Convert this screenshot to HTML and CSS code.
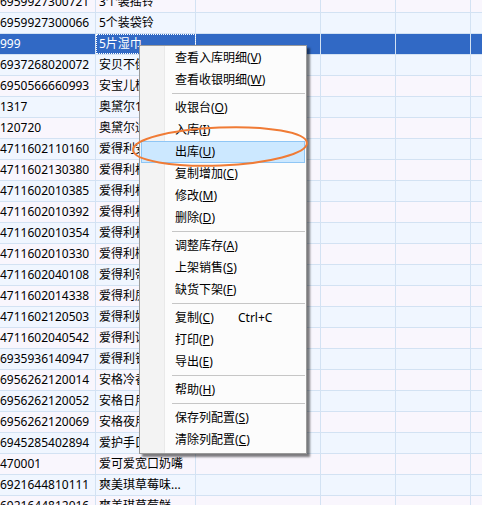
FILE: index.html
```html
<!DOCTYPE html>
<html lang="zh-CN">
<head>
<meta charset="utf-8">
<title>商品列表</title>
<link rel="stylesheet" href="styles.css">
</head>
<body>
<div class="grid">
  <div class="row even"><div class="c c1">6959927300721</div><div class="c c2">3个装摇铃</div><div class="c c3"></div><div class="c c4"></div><div class="c c5"></div><div class="c c6"></div></div>
  <div class="row odd"><div class="c c1">6959927300066</div><div class="c c2">5个装袋铃</div><div class="c c3"></div><div class="c c4"></div><div class="c c5"></div><div class="c c6"></div></div>
  <div class="row sel"><div class="c c1">999</div><div class="c c2 focus">5片湿巾</div><div class="c c3"></div><div class="c c4"></div><div class="c c5"></div><div class="c c6"></div></div>
  <div class="row odd"><div class="c c1">6937268020072</div><div class="c c2">安贝不倒翁</div><div class="c c3"></div><div class="c c4"></div><div class="c c5"></div><div class="c c6"></div></div>
  <div class="row even"><div class="c c1">6950566660993</div><div class="c c2">安宝儿梳子</div><div class="c c3"></div><div class="c c4"></div><div class="c c5"></div><div class="c c6"></div></div>
  <div class="row odd"><div class="c c1">1317</div><div class="c c2">奥黛尔1段</div><div class="c c3"></div><div class="c c4"></div><div class="c c5"></div><div class="c c6"></div></div>
  <div class="row even"><div class="c c1">120720</div><div class="c c2">奥黛尔适度</div><div class="c c3"></div><div class="c c4"></div><div class="c c5"></div><div class="c c6"></div></div>
  <div class="row odd"><div class="c c1">4711602110160</div><div class="c c2">爱得利安抚奶嘴</div><div class="c c3"></div><div class="c c4"></div><div class="c c5"></div><div class="c c6"></div></div>
  <div class="row even"><div class="c c1">4711602130380</div><div class="c c2">爱得利标准奶瓶</div><div class="c c3"></div><div class="c c4"></div><div class="c c5"></div><div class="c c6"></div></div>
  <div class="row odd"><div class="c c1">4711602010385</div><div class="c c2">爱得利标口奶瓶</div><div class="c c3"></div><div class="c c4"></div><div class="c c5"></div><div class="c c6"></div></div>
  <div class="row even"><div class="c c1">4711602010392</div><div class="c c2">爱得利标口奶嘴</div><div class="c c3"></div><div class="c c4"></div><div class="c c5"></div><div class="c c6"></div></div>
  <div class="row odd"><div class="c c1">4711602010354</div><div class="c c2">爱得利标准奶嘴</div><div class="c c3"></div><div class="c c4"></div><div class="c c5"></div><div class="c c6"></div></div>
  <div class="row even"><div class="c c1">4711602010330</div><div class="c c2">爱得利椭圆奶嘴</div><div class="c c3"></div><div class="c c4"></div><div class="c c5"></div><div class="c c6"></div></div>
  <div class="row odd"><div class="c c1">4711602040108</div><div class="c c2">爱得利带柄奶瓶</div><div class="c c3"></div><div class="c c4"></div><div class="c c5"></div><div class="c c6"></div></div>
  <div class="row even"><div class="c c1">4711602014338</div><div class="c c2">爱得利房型奶瓶</div><div class="c c3"></div><div class="c c4"></div><div class="c c5"></div><div class="c c6"></div></div>
  <div class="row odd"><div class="c c1">4711602120503</div><div class="c c2">爱得利奶瓶刷</div><div class="c c3"></div><div class="c c4"></div><div class="c c5"></div><div class="c c6"></div></div>
  <div class="row even"><div class="c c1">4711602040542</div><div class="c c2">爱得利训练杯</div><div class="c c3"></div><div class="c c4"></div><div class="c c5"></div><div class="c c6"></div></div>
  <div class="row odd"><div class="c c1">6935936140947</div><div class="c c2">爱得利钙奶瓶</div><div class="c c3"></div><div class="c c4"></div><div class="c c5"></div><div class="c c6"></div></div>
  <div class="row even"><div class="c c1">6956262120014</div><div class="c c2">安格冷香霜</div><div class="c c3"></div><div class="c c4"></div><div class="c c5"></div><div class="c c6"></div></div>
  <div class="row odd"><div class="c c1">6956262120052</div><div class="c c2">安格日用巾</div><div class="c c3"></div><div class="c c4"></div><div class="c c5"></div><div class="c c6"></div></div>
  <div class="row even"><div class="c c1">6956262120069</div><div class="c c2">安格夜用巾</div><div class="c c3"></div><div class="c c4"></div><div class="c c5"></div><div class="c c6"></div></div>
  <div class="row odd"><div class="c c1">6945285402894</div><div class="c c2">爱护手口湿巾</div><div class="c c3"></div><div class="c c4"></div><div class="c c5"></div><div class="c c6"></div></div>
  <div class="row even"><div class="c c1">470001</div><div class="c c2">爱可爱宽口奶嘴</div><div class="c c3"></div><div class="c c4"></div><div class="c c5"></div><div class="c c6"></div></div>
  <div class="row odd"><div class="c c1">6921644810111</div><div class="c c2">爽美琪草莓味...</div><div class="c c3"></div><div class="c c4"></div><div class="c c5"></div><div class="c c6"></div></div>
  <div class="row even"><div class="c c1">6921644812016</div><div class="c c2">爽美琪草莓鲜...</div><div class="c c3"></div><div class="c c4"></div><div class="c c5"></div><div class="c c6"></div></div>
</div>

<div class="menu">
  <div class="item">查看入库明细(<u>V</u>)</div>
  <div class="item">查看收银明细(<u>W</u>)</div>
  <div class="sep"></div>
  <div class="item">收银台(<u>O</u>)</div>
  <div class="item">入库(<u>I</u>)</div>
  <div class="item hot">出库(<u>U</u>)</div>
  <div class="item">复制增加(<u>C</u>)</div>
  <div class="item">修改(<u>M</u>)</div>
  <div class="item">删除(<u>D</u>)</div>
  <div class="sep"></div>
  <div class="item">调整库存(<u>A</u>)</div>
  <div class="item">上架销售(<u>S</u>)</div>
  <div class="item">缺货下架(<u>F</u>)</div>
  <div class="sep"></div>
  <div class="item"><span class="label">复制(<u>C</u>)</span><span class="key">Ctrl+C</span></div>
  <div class="item">打印(<u>P</u>)</div>
  <div class="item">导出(<u>E</u>)</div>
  <div class="sep"></div>
  <div class="item">帮助(<u>H</u>)</div>
  <div class="sep"></div>
  <div class="item">保存列配置(<u>S</u>)</div>
  <div class="item">清除列配置(<u>C</u>)</div>
</div>

<svg class="mark" width="482" height="505" viewBox="0 0 482 505" xmlns="http://www.w3.org/2000/svg">
  <ellipse cx="220" cy="146.5" rx="87" ry="19" transform="rotate(-2.3 220 146.5)" fill="none" stroke="#f07b35" stroke-width="2"/>
</svg>
</body>
</html>
```
FILE: styles.css
```css
html, body {
  margin: 0;
  padding: 0;
  width: 482px;
  height: 505px;
  overflow: hidden;
  background: #ffffff;
}

body {
  position: relative;
  font-family: "Noto Sans", "Noto Sans CJK SC", sans-serif;
  font-size: 12px;
  color: #000;
}

.grid {
  margin-top: -8px;
}

.row {
  display: flex;
  height: 21px;
  box-sizing: border-box;
  border-bottom: 1px solid #d3e2f3;
}

.row.even { background: #f9f6fd; }
.row.odd { background: #f0f6ff; }
.row.sel { background: #3169c5; color: #fff; }

.c {
  box-sizing: border-box;
  height: 20px;
  line-height: 20px;
  border-right: 1px solid #d3e2f3;
  white-space: nowrap;
  overflow: hidden;
  flex: none;
}

.c1 { width: 96px; padding-left: 0; }
.c2 { width: 100px; padding-left: 3px; }
.c3 { width: 125px; }
.c4 { width: 75px; }
.c5 { width: 75px; }
.c6 { flex: 1; border-right: none; }

.focus {
  outline: 1px dotted #ffffff;
  outline-offset: -1px;
}

.menu {
  position: absolute;
  left: 139px;
  top: 45px;
  width: 168px;
  box-sizing: border-box;
  border: 1px solid #9a9a9a;
  padding: 1px 0 2px 0;
  background: linear-gradient(90deg, #f3f3f3 0, #f3f3f3 24px, #e9e9e9 24px, #e9e9e9 25px, #fcfcfc 25px);
  box-shadow: 3px 3px 2px rgba(0, 0, 0, 0.5);
}

.item {
  display: flex;
  height: 22px;
  line-height: 20px;
  box-sizing: border-box;
  margin: 0 1px;
  padding-left: 33px;
  border: 1px solid transparent;
  white-space: nowrap;
}

.item.hot {
  background: #cce8ff;
  border-color: #8fc6f5;
}

.label {
  width: 63px;
  flex: none;
}

.sep {
  height: 1px;
  background: #c6c6c6;
  margin: 2px 1px 3px 32px;
}

.mark {
  position: absolute;
  left: 0;
  top: 0;
  pointer-events: none;
}
```
